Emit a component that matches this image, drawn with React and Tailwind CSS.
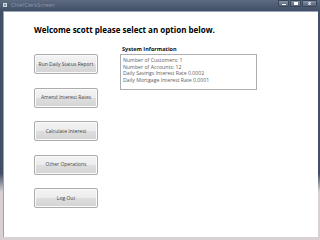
import React from "react";

function Btn({ children }) {
  return (
    <div className="w-[64px] h-[20px] rounded-[2px] border border-[#acacac] bg-[linear-gradient(#f4f4f4_0%,#ececec_48%,#dedede_52%,#d4d4d4_100%)] flex items-center justify-center text-[5px] leading-none text-[#444] shadow-[inset_0_0_0_1px_#fafafa]">
      {children}
    </div>
  );
}

export default function App() {
  return (
    <div className="w-[320px] h-[240px] flex flex-col bg-[#d8d0d2] font-['Open_Sans',sans-serif] overflow-hidden">
      <div className="h-[11px] flex items-start bg-[linear-gradient(#5d6a80,#414f67)]">
        <div className="w-[4px] h-[4px] mt-[3px] ml-[3px] bg-[#6fa89a] border border-[#cfd8e0]" />
        <div className="ml-[4px] mt-[1px] text-[5.5px] leading-[9px] text-[#8e97a8]">ChiefClerkScreen</div>
        <div className="flex-1" />
        <div className="flex mr-[3px] gap-[1px]">
          <div className="w-[11px] h-[7px] bg-[linear-gradient(#8390a4,#56637a)] border border-[#39465a] rounded-bl-[2px] flex items-center justify-center">
            <div className="w-[4px] h-[1px] bg-white mt-[2px]" />
          </div>
          <div className="w-[11px] h-[7px] bg-[linear-gradient(#8390a4,#56637a)] border border-[#39465a] flex items-center justify-center">
            <div className="w-[4px] h-[3px] border border-white border-t-2" />
          </div>
          <div className="w-[15px] h-[7px] bg-[linear-gradient(#8390a4,#56637a)] border border-[#39465a] rounded-br-[2px] flex items-center justify-center text-[5px] leading-none font-bold text-white">
            x
          </div>
        </div>
      </div>
      <div className="flex-1 flex">
        <div className="w-[3px] bg-[linear-gradient(#414f67_0%,#414f67_72%,#d8d0d2_80%)]" />
        <div className="flex-1 bg-white border border-[#9aa4b4] border-r-0 border-b-0 pl-[30px] pt-[13px]">
          <div className="text-[8px] leading-[10px] font-bold text-black">
            Welcome scott please select an option below.
          </div>
          <div className="flex mt-[9px]">
            <div className="flex flex-col gap-[13.5px] pt-[10px]">
              <Btn>Run Daily Status Report</Btn>
              <Btn>Amend Interest Rates</Btn>
              <Btn>Calculate Interest</Btn>
              <Btn>Other Operations</Btn>
              <Btn>Log Out</Btn>
            </div>
            <div className="ml-[22px] flex flex-col">
              <div className="pl-[2px] h-[10px] text-[5.5px] leading-[10px] font-bold text-[#111]">
                System Information
              </div>
              <div className="w-[137px] h-[36px] border border-[#abadb3] pl-[2px] pt-[2px] text-[5.2px] leading-[6.5px] text-[#606060]">
                <div>Number of Customers: 1</div>
                <div>Number of Accounts: 12</div>
                <div>Daily Savings Interest Rate 0.0002</div>
                <div>Daily Mortgage Interest Rate 0.0001</div>
              </div>
            </div>
          </div>
        </div>
        <div className="w-[2px] bg-[linear-gradient(#414f67_0%,#414f67_72%,#d8d0d2_80%)]" />
      </div>
      <div className="h-[3px] bg-[#d8d0d2]" />
    </div>
  );
}
